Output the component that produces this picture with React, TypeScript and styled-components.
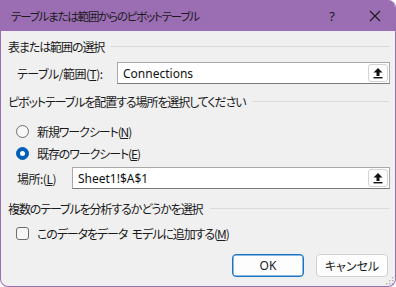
import React from "react";
import styled, { createGlobalStyle } from "styled-components";

const GlobalStyle = createGlobalStyle`
  html, body {
    margin: 0;
    padding: 0;
    background: #ffffff;
  }
  body {
    font-family: "Noto Sans CJK JP", "Noto Sans", sans-serif;
    font-feature-settings: "palt";
    color: #1a1a1a;
  }
`;

const UploadIcon = () => (
  <svg width="12" height="12" viewBox="0 0 12 12">
    <path d="M6 1 L10.5 5.5 L7.5 5.5 L7.5 9 L4.5 9 L4.5 5.5 L1.5 5.5 Z" fill="#111" />
    <rect x="1.5" y="10" width="9" height="1.4" fill="#111" />
  </svg>
);

const Grip = () => (
  <svg width="10" height="10" viewBox="0 0 10 10">
    {[
      [8, 2],
      [8, 5],
      [5, 5],
      [8, 8],
      [5, 8],
      [2, 8]
    ].map(([x, y]) => (
      <rect key={`${x}-${y}`} x={x} y={y} width="1.4" height="1.4" fill="#b0b0b0" />
    ))}
  </svg>
);

export default function App() {
  return (
    <>
      <GlobalStyle />
      <Window>
        <TitleBar>
          <TitleText>テーブルまたは範囲からのピボットテーブル</TitleText>
          <HelpBtn>?</HelpBtn>
          <CloseBtn>
            <svg width="12" height="12" viewBox="0 0 12 12">
              <path d="M1 1 L11 11 M11 1 L1 11" stroke="#1a1a1a" strokeWidth="1.1" />
            </svg>
          </CloseBtn>
        </TitleBar>
        <Body>
          <SectionHead top={6}>
            <span>表または範囲の選択</span>
            <Rule />
          </SectionHead>
          <FieldRow top={7}>
            <FieldLabel width={100}>
              テーブル/範囲(<u>T</u>):
            </FieldLabel>
            <InputBox>
              <InputText>Connections</InputText>
              <PickBtn>
                <UploadIcon />
              </PickBtn>
            </InputBox>
          </FieldRow>

          <SectionHead top={8}>
            <span>ピボットテーブルを配置する場所を選択してください</span>
            <Rule />
          </SectionHead>
          <OptionRow top={11}>
            <Radio />
            <span>
              新規ワークシート(<u>N</u>)
            </span>
          </OptionRow>
          <OptionRow top={2}>
            <Radio checked />
            <span>
              既存のワークシート(<u>E</u>)
            </span>
          </OptionRow>
          <FieldRow top={4}>
            <FieldLabel width={55}>
              場所:(<u>L</u>)
            </FieldLabel>
            <InputBox>
              <InputText>Sheet1!$A$1</InputText>
              <PickBtn>
                <UploadIcon />
              </PickBtn>
            </InputBox>
          </FieldRow>

          <SectionHead top={10}>
            <span>複数のテーブルを分析するかどうかを選択</span>
            <Rule />
          </SectionHead>
          <OptionRow top={6}>
            <Check />
            <span>
              このデータをデータ モデルに追加する(<u>M</u>)
            </span>
          </OptionRow>

          <Footer>
            <DlgButton primary>OK</DlgButton>
            <DlgButton>キャンセル</DlgButton>
          </Footer>
        </Body>
        <GripWrap>
          <Grip />
        </GripWrap>
      </Window>
    </>
  );
}

const Window = styled.div`
  position: relative;
  width: 396px;
  height: 287px;
  box-sizing: border-box;
  border: 1px solid #9b6db3;
  border-top: none;
  border-radius: 0 8px 8px 8px;
  overflow: hidden;
  background: #f0f0f0;
  display: flex;
  flex-direction: column;
`;

const TitleBar = styled.div`
  height: 31px;
  flex: none;
  background: #9b6db3;
  display: flex;
  align-items: center;
  padding-left: 10px;
  font-size: 11.5px;
  color: #1a1a1a;
`;

const TitleText = styled.div`
  flex: 1;
  letter-spacing: -1.2px;
`;

const HelpBtn = styled.div`
  width: 20px;
  text-align: center;
  font-family: "Noto Sans", sans-serif;
  font-size: 13px;
  margin-right: 23px;
`;

const CloseBtn = styled.div`
  width: 20px;
  display: flex;
  justify-content: center;
  margin-right: 10px;
`;

const Body = styled.div`
  flex: 1;
  display: flex;
  flex-direction: column;
  padding: 0 5px 0 7px;
  font-size: 12px;
  letter-spacing: -1.1px;
  word-spacing: 3px;
`;

const SectionHead = styled.div<{ top: number }>`
  margin-top: ${p => p.top}px;
  height: 18px;
  display: flex;
  align-items: center;
  gap: 7px;
  white-space: nowrap;
`;

const Rule = styled.div`
  flex: 1;
  height: 1px;
  background: #dadada;
  margin-right: 1px;
`;

const FieldRow = styled.div<{ top: number }>`
  margin-top: ${p => p.top}px;
  height: 22px;
  display: flex;
  align-items: center;
  padding-left: 9px;
`;

const FieldLabel = styled.div<{ width: number }>`
  width: ${p => p.width}px;
  flex: none;
  white-space: nowrap;
  letter-spacing: -0.5px;
`;

const InputBox = styled.div`
  flex: 1;
  height: 22px;
  box-sizing: border-box;
  border: 1px solid #a8a8a8;
  border-bottom-color: #7a7a7a;
  background: #ffffff;
  display: flex;
  align-items: center;
  padding: 0 1px 0 5px;
`;

const InputText = styled.div`
  flex: 1;
  font-family: "Noto Sans", sans-serif;
  font-size: 12px;
  letter-spacing: 0;
  color: #111;
`;

const PickBtn = styled.div`
  width: 20px;
  height: 18px;
  box-sizing: border-box;
  border: 1px solid #d4d4d4;
  border-radius: 3px;
  background: #fdfdfd;
  display: flex;
  align-items: center;
  justify-content: center;
`;

const OptionRow = styled.div<{ top: number }>`
  margin-top: ${p => p.top}px;
  height: 20px;
  display: flex;
  align-items: center;
  gap: 8px;
  padding-left: 8px;
`;

const Radio = styled.div<{ checked?: boolean }>`
  width: 13px;
  height: 13px;
  box-sizing: border-box;
  border-radius: 50%;
  flex: none;
  background: ${p => (p.checked ? "#005fb8" : "#f7f7f7")};
  border: 1px solid ${p => (p.checked ? "#005fb8" : "#6e6e6e")};
  display: flex;
  align-items: center;
  justify-content: center;
  &::after {
    content: "";
    display: ${p => (p.checked ? "block" : "none")};
    width: 5px;
    height: 5px;
    border-radius: 50%;
    background: #ffffff;
  }
`;

const Check = styled.div`
  width: 13px;
  height: 13px;
  box-sizing: border-box;
  flex: none;
  border: 1px solid #6e6e6e;
  border-radius: 3px;
  background: #f7f7f7;
`;

const Footer = styled.div`
  margin-top: 11px;
  display: flex;
  justify-content: flex-end;
  gap: 12px;
  padding-right: 2px;
`;

const DlgButton = styled.div<{ primary?: boolean }>`
  width: 72px;
  height: 23px;
  box-sizing: border-box;
  border-radius: 4px;
  border: 1px solid ${p => (p.primary ? "#1a74c4" : "#d0d0d0")};
  box-shadow: ${p => (p.primary ? "inset 0 0 0 0.5px #1a74c4" : "none")};
  background: #fdfdfd;
  display: flex;
  align-items: center;
  justify-content: center;
  font-size: 12px;
  letter-spacing: 0;
  font-family: "Noto Sans", "Noto Sans CJK JP", sans-serif;
`;

const GripWrap = styled.div`
  position: absolute;
  right: 1px;
  bottom: 1px;
  display: flex;
`;
